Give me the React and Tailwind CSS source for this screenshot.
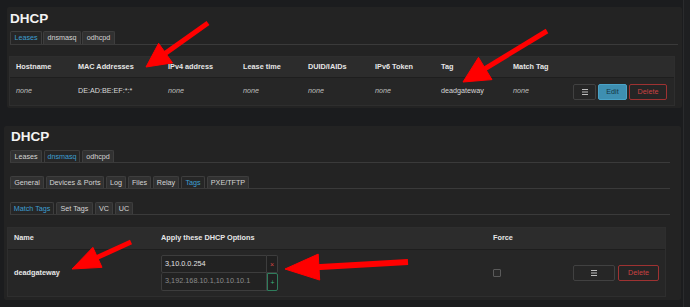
import React from 'react';

const F = "font-['Liberation_Sans',Arial,sans-serif]";

const Tab = ({ label, active, className = '' }) => (
  <div
    className={`h-full flex items-center justify-center border border-b-0 border-[#3e3e3e] rounded-t-[2px] text-[7.2px] leading-none whitespace-nowrap ${
      active ? 'bg-[#262626] text-[#3d9fd1]' : 'bg-[#313131] text-[#d4d4d4]'
    } ${className}`}
  >
    {label}
  </div>
);

const arrow = (x1, y1, x2, y2, hl, hw) => {
  const dx = x2 - x1;
  const dy = y2 - y1;
  const L = Math.hypot(dx, dy);
  const ux = dx / L;
  const uy = dy / L;
  const px = -uy;
  const py = ux;
  const bx = x2 - ux * hl;
  const by = y2 - uy * hl;
  return {
    shaft: [x1, y1, bx + ux * 3, by + uy * 3],
    head: `${x2},${y2} ${bx + px * hw},${by + py * hw} ${bx - px * hw},${by - py * hw}`,
  };
};

const Arrows = () => {
  const list = [
    [208, 23, 146, 67, 24, 12, 5],
    [547, 31, 463, 82, 26, 13, 5],
    [131, 242, 72, 269, 28, 11, 5],
    [408, 262, 285, 269, 34, 13, 6],
  ];
  return (
    <svg className="absolute inset-0 pointer-events-none" width="690" height="307" viewBox="0 0 690 307">
      {list.map(([x1, y1, x2, y2, hl, hw, sw], i) => {
        const a = arrow(x1, y1, x2, y2, hl, hw);
        return (
          <g key={i} fill="#ff0000" stroke="#ff0000">
            <line x1={a.shaft[0]} y1={a.shaft[1]} x2={a.shaft[2]} y2={a.shaft[3]} strokeWidth={sw} />
            <polygon points={a.head} strokeWidth="1" strokeLinejoin="round" />
          </g>
        );
      })}
    </svg>
  );
};

const Btn = ({ children, className = '' }) => (
  <div className={`h-[16px] flex items-center justify-center rounded-[2px] border text-[7.2px] leading-none ${className}`}>
    {children}
  </div>
);

const Menu = () => (
  <svg width="6" height="6" viewBox="0 0 6 6">
    <rect x="0" y="0" width="6" height="1" fill="#bdbdbd" />
    <rect x="0" y="2.5" width="6" height="1" fill="#bdbdbd" />
    <rect x="0" y="5" width="6" height="1" fill="#bdbdbd" />
  </svg>
);

const none = 'italic text-[#bdbdbd]';

export default function App() {
  const heads = ['Hostname', 'MAC Addresses', 'IPv4 address', 'Lease time', 'DUID/IAIDs', 'IPv6 Token', 'Tag', 'Match Tag'];
  const cells = [
    ['none', true],
    ['DE:AD:BE:EF:*:*', false],
    ['none', true],
    ['none', true],
    ['none', true],
    ['none', true],
    ['deadgateway', false],
    ['none', true],
  ];
  const grid = 'grid grid-cols-[62px_90px_75px_65px_67px_66px_72px_60px_1fr] pl-[6px] pr-[7px] items-center';

  return (
    <div className={`relative w-[690px] h-[307px] overflow-hidden bg-[#1b1c1e] ${F}`}>
      {/* right edge strip */}
      <div className="absolute top-0 right-0 w-[7px] h-full bg-[#1e1f21] border-l border-[#2a2b2d]" />

      {/* Leases screenshot */}
      <div className="pt-[7px] pl-[7px]">
        <div className="w-[675px] h-[101px] bg-[#232323] rounded-[2px] pt-[4px] pl-[3px]">
          <div className="text-[13.5px] leading-[16px] font-bold text-[#f3f3f3]">DHCP</div>
          <div className="mt-[4px] w-[668px] h-[14px] flex items-end gap-[1px] border-b border-[#3a3a3a]">
            <Tab label="Leases" active className="w-[32px]" />
            <Tab label="dnsmasq" className="w-[38px]" />
            <Tab label="odhcpd" className="w-[33px]" />
          </div>
          <div className="mt-[11px] -ml-[1px] w-[666px] border border-[#2e2e2e]">
            <div className={`${grid} h-[21px] bg-[#2c2c2c] border-b border-[#1e1e1e] text-[7.3px] font-bold text-[#e6e6e6]`}>
              {heads.map((h) => (
                <div key={h} className="whitespace-nowrap">{h}</div>
              ))}
              <div />
            </div>
            <div className={`${grid} h-[27px] bg-[#262626] text-[7.2px] text-[#d8d8d8]`}>
              {cells.map(([t, it], i) => (
                <div key={i} className={it ? none : ''}>{t}</div>
              ))}
              <div className="flex justify-end gap-[2px]">
                <Btn className="w-[23px] border-[#414141] bg-[#262626]"><Menu /></Btn>
                <Btn className="w-[29px] border-[#4aa3c7] bg-[#3e8fb1] text-[#143543]">Edit</Btn>
                <Btn className="w-[38px] border-[#9e3232] bg-[#252525] text-[#cc4343]">Delete</Btn>
              </div>
            </div>
          </div>
        </div>
      </div>

      {/* Tags screenshot */}
      <div className="mt-[18px] pl-[4px]">
        <div className="w-[677px] h-[174px] bg-[#232323] rounded-[2px] pt-[3px] pl-[6px]">
          <div className="ml-[1px] text-[13.5px] leading-[16px] font-bold text-[#f3f3f3]">DHCP</div>
          <div className="mt-[5px] w-[660px] h-[13px] flex items-end gap-[2px] border-b border-[#3a3a3a]">
            <Tab label="Leases" className="w-[32px]" />
            <Tab label="dnsmasq" active className="w-[36px]" />
            <Tab label="odhcpd" className="w-[32px]" />
          </div>
          <div className="mt-[13px] w-[660px] h-[13px] flex items-end gap-[2px] border-b border-[#3a3a3a]">
            <Tab label="General" className="w-[34px]" />
            <Tab label="Devices & Ports" className="w-[58px]" />
            <Tab label="Log" className="w-[20px]" />
            <Tab label="Files" className="w-[23px]" />
            <Tab label="Relay" className="w-[26px]" />
            <Tab label="Tags" active className="w-[24px]" />
            <Tab label="PXE/TFTP" className="w-[42px]" />
          </div>
          <div className="mt-[13px] w-[660px] h-[13px] flex items-end gap-[2px] border-b border-[#3a3a3a]">
            <Tab label="Match Tags" active className="w-[44px]" />
            <Tab label="Set Tags" className="w-[37px]" />
            <Tab label="VC" className="w-[18px]" />
            <Tab label="UC" className="w-[18px]" />
          </div>
          <div className="mt-[12px] -ml-[3px] w-[659px] border border-[#2e2e2e]">
            <div className="grid grid-cols-[147px_332px_80px_1fr] pl-[6px] pr-[7px] items-center h-[22px] bg-[#2c2c2c] border-b border-[#1e1e1e] text-[7.3px] font-bold text-[#e6e6e6]">
              <div>Name</div>
              <div>Apply these DHCP Options</div>
              <div>Force</div>
              <div />
            </div>
            <div className="grid grid-cols-[147px_332px_80px_1fr] pl-[6px] pr-[7px] items-center h-[46px] bg-[#262626] text-[7.3px]">
              <div className="font-bold text-[#e6e6e6]">deadgateway</div>
              <div className="flex flex-col w-[117px]">
                <div className="flex h-[18px]">
                  <div className="flex-1 flex items-center pl-[3px] bg-[#222222] border border-[#3d3d3d] rounded-l-[2px] text-[#e2e2e2]">3,10.0.0.254</div>
                  <div className="w-[11px] flex items-center justify-center border border-l-0 border-[#3d3d3d] bg-[#202020] rounded-r-[2px] text-[#d34444] text-[7px] leading-none">×</div>
                </div>
                <div className="flex h-[18px]">
                  <div className="flex-1 flex items-center pl-[3px] bg-[#222222] border border-t-0 border-[#3d3d3d] rounded-l-[2px] text-[#8a8a8a]">3,192.168.10.1,10.10.10.1</div>
                  <div className="w-[11px] flex items-center justify-center border border-[#2f7d5c] bg-[#202020] rounded-r-[2px] text-[#3bb07c] text-[7px] leading-none">+</div>
                </div>
              </div>
              <div className="flex">
                <div className="w-[8px] h-[8px] border border-[#5a5a5a] rounded-[1px] bg-[#2a2a2a]" />
              </div>
              <div className="flex justify-end gap-[3px]">
                <Btn className="w-[42px] border-[#414141] bg-[#262626]"><Menu /></Btn>
                <Btn className="w-[41px] border-[#9e3232] bg-[#252525] text-[#cc4343]">Delete</Btn>
              </div>
            </div>
          </div>
        </div>
      </div>

      <Arrows />
    </div>
  );
}
